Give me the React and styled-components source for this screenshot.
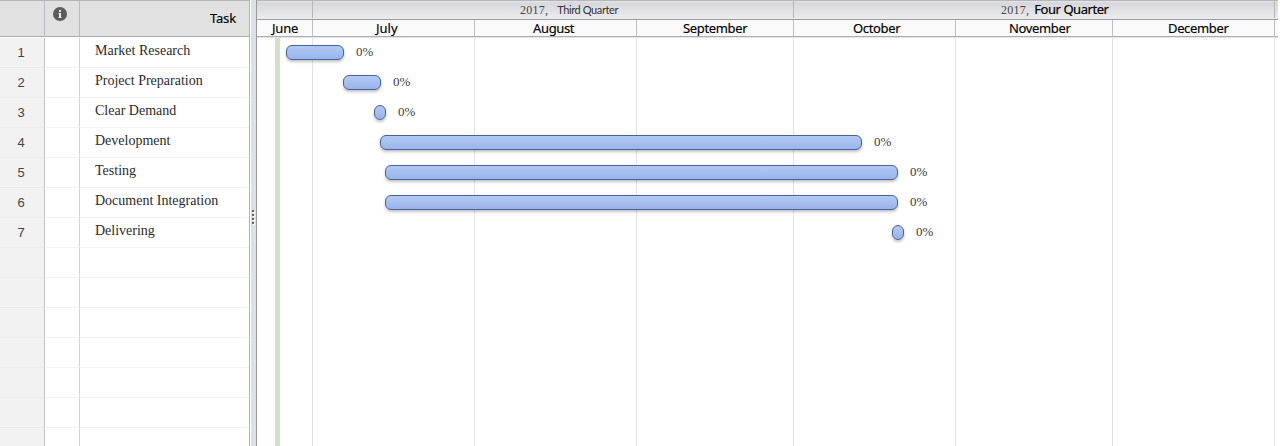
import React from "react";
import styled, { createGlobalStyle } from "styled-components";

const GlobalStyle = createGlobalStyle`
  * { box-sizing: border-box; }
  body { margin: 0; background: #fff; overflow: hidden; }
`;

const Page = styled.div`
  display: flex;
  width: 1280px;
  height: 446px;
  overflow: hidden;
  background: #fff;
`;

const TaskTable = styled.div`
  flex: none;
  width: 250px;
  border-right: 1px solid #b3b3b3;
`;

const Row = styled.div`
  display: grid;
  grid-template-columns: 45px 35px 1fr;
  height: 30px;
`;

const HeaderRow = styled(Row)`
  height: 37px;
  margin-bottom: 1px;
`;

const HeaderCell = styled.div`
  display: flex;
  justify-content: ${(p) => p.$align || "center"};
  background: #e1e1e1;
  border-top: 1px solid #b5b6ba;
  border-bottom: 1px solid #acacac;
  border-right: ${(p) => (p.$last ? "0" : "1px solid #b9babd")};
  padding: ${(p) => p.$pad || "0"};
  font: 400 13px/17px "Noto Sans", "Open Sans", sans-serif;
  -webkit-text-stroke: 0.15px #000;
  letter-spacing: -0.15px;
  color: #000;
`;

const IndexCell = styled.div`
  background: #f2f2f2;
  border-right: 1px solid #c3c3c3;
  border-bottom: 1px solid #ebebeb;
  padding: 7px 2px 0 0;
  text-align: center;
  font: 13px/15px "Liberation Sans", Arial, sans-serif;
  color: #444;
`;

const InfoCell = styled.div`
  border-right: 1px solid #d3d3d3;
  border-bottom: 1px solid #f2f2f2;
`;

const NameCell = styled.div`
  border-bottom: 1px solid #f2f2f2;
  padding: 4px 0 0 15px;
  font: 14px/17px "Liberation Serif", "Times New Roman", serif;
  white-space: nowrap;
  color: #2b2b2b;
`;

const Splitter = styled.div`
  flex: none;
  display: flex;
  flex-direction: column;
  gap: 2px;
  width: 7px;
  padding: 210px 0 0 1px;
  border-left: 1px solid #fff;
  border-right: 1px solid #999a9d;
  background: #dde1e6;
`;

const GripDot = styled.i`
  width: 2px;
  height: 2px;
  background: #60636a;
  box-shadow: 1px 1px 0 #fff;
`;

const Timeline = styled.div`
  flex: none;
  display: flex;
  flex-direction: column;
  width: 1021px;
  height: 446px;
  overflow: hidden;
`;

const Quarters = styled.div`
  flex: none;
  display: flex;
  height: 20px;
  border-top: 1px solid #b5b6ba;
  border-bottom: 1px solid #9c9ca0;
  background: linear-gradient(#e4e5e9 0, #d7d8dc 2px, #ececee 100%);
`;

const Quarter = styled.div`
  flex: none;
  width: ${(p) => p.$w}px;
  height: 17px;
  padding-left: ${(p) => p.$pad || 0}px;
  border-right: 1px solid #b7b8bb;
  display: flex;
  gap: ${(p) => p.$gap || 0}px;
  white-space: nowrap;
`;

const Year = styled.span`
  font: 12px/18px "Liberation Serif", serif;
  letter-spacing: 0.25px;
  color: #444;
`;

const QuarterName = styled.span`
  font: ${(p) => (p.$strong ? '400 13px/17px "Noto Sans"' : '400 11px/17px Lato')}, "Open Sans", sans-serif;
  -webkit-text-stroke: ${(p) => (p.$strong ? "0.2px #000" : "0")};
  letter-spacing: ${(p) => p.$track}px;
  color: ${(p) => (p.$strong ? "#000" : "#333")};
`;

const Months = styled.div`
  flex: none;
  display: flex;
  height: 18px;
  border-bottom: 1px solid #e3e4e5;
  background: #fafafa;
`;

const Month = styled.div`
  flex: none;
  width: ${(p) => p.$w}px;
  padding-left: ${(p) => p.$pad}px;
  border-right: 1px solid #bfbfc1;
  border-bottom: 1px solid #acadb0;
  font: 400 13px/17px "Noto Sans", "Open Sans", sans-serif;
  -webkit-text-stroke: 0.15px #000;
  letter-spacing: ${(p) => p.$track}px;
  white-space: nowrap;
  color: #000;
`;

const NextMonth = styled.div`
  flex: 1;
  border-bottom: 1px solid #acadb0;
`;

const Chart = styled.div`
  flex: 1;
  display: grid;
  > * { grid-area: 1 / 1; }
`;

const Columns = styled.div`
  display: flex;
`;

const Column = styled.div`
  flex: none;
  width: ${(p) => p.$w}px;
  padding-left: 18px;
  border-right: 1px solid #e4e4e6;
`;

const TodayBand = styled.div`
  width: 5px;
  height: 100%;
  background: #cfe2c9;
`;

const Bars = styled.div`
  display: flex;
  flex-direction: column;
  z-index: 1;
`;

const BarRow = styled.div`
  display: flex;
  gap: 12px;
  height: 30px;
  padding: 7px 0 0 ${(p) => p.$start}px;
`;

const Bar = styled.div`
  width: ${(p) => p.$w}px;
  height: 15px;
  border: 1px solid #48619a;
  border-radius: 6px;
  background: linear-gradient(#b3c9f2, #98b5ec);
  box-shadow: 0 2px 3px rgba(0, 0, 0, 0.24);
`;

const Percent = styled.span`
  font: 13px/14px "Liberation Serif", serif;
  color: #3b3b3b;
`;

const tasks = [
  { name: "Market Research", start: 29, width: 58 },
  { name: "Project Preparation", start: 86, width: 38 },
  { name: "Clear Demand", start: 117, width: 12 },
  { name: "Development", start: 123, width: 482 },
  { name: "Testing", start: 128, width: 513 },
  { name: "Document Integration", start: 128, width: 513 },
  { name: "Delivering", start: 635, width: 12 },
];

const months = [
  { name: "June", w: 56, pad: 15, track: -0.2 },
  { name: "July", w: 162, pad: 63, track: 0 },
  { name: "August", w: 162, pad: 58, track: -0.35 },
  { name: "September", w: 157, pad: 46, track: -0.35 },
  { name: "October", w: 162, pad: 59, track: -0.35 },
  { name: "November", w: 157, pad: 53, track: -0.35 },
  { name: "December", w: 162, pad: 55, track: -0.35 },
];

const InfoIcon = () => (
  <svg width="14" height="14" viewBox="0 0 14 14">
    <circle cx="7" cy="7" r="7" fill="#5c5c5c" />
    <path d="M6 3h2v2H6zM6 6h2v5H6z" fill="#e8e8e8" />
    <path d="M5 6h1v1H5zM5 10h1v1H5zM8 10h1v1H8z" fill="#a8a8a8" />
  </svg>
);

export default function App() {
  return (
    <Page>
      <GlobalStyle />
      <TaskTable>
        <HeaderRow>
          <HeaderCell />
          <HeaderCell $pad="6px 4px 0 0"><InfoIcon /></HeaderCell>
          <HeaderCell $last $align="flex-end" $pad="9px 13px 0 0">Task</HeaderCell>
        </HeaderRow>
        {Array.from({ length: 14 }, (_, i) => (
          <Row key={i}>
            <IndexCell>{tasks[i] ? i + 1 : ""}</IndexCell>
            <InfoCell />
            <NameCell>{tasks[i]?.name}</NameCell>
          </Row>
        ))}
      </TaskTable>
      <Splitter>
        <GripDot /><GripDot /><GripDot /><GripDot />
      </Splitter>
      <Timeline>
        <Quarters>
          <Quarter $w={56} />
          <Quarter $w={481} $pad={207} $gap={9}>
            <Year>2017,</Year>
            <QuarterName $track={-0.4}>Third Quarter</QuarterName>
          </Quarter>
          <Quarter $w={481} $pad={207} $gap={5}>
            <Year>2017,</Year>
            <QuarterName $strong $track={-0.45}>Four Quarter</QuarterName>
          </Quarter>
        </Quarters>
        <Months>
          {months.map((m) => (
            <Month key={m.name} $w={m.w} $pad={m.pad} $track={m.track}>{m.name}</Month>
          ))}
          <NextMonth />
        </Months>
        <Chart>
          <Columns>
            {months.map((m, i) => (
              <Column key={m.name} $w={m.w}>{i === 0 && <TodayBand />}</Column>
            ))}
          </Columns>
          <Bars>
            {tasks.map((t) => (
              <BarRow key={t.name} $start={t.start}>
                <Bar $w={t.width} />
                <Percent>0%</Percent>
              </BarRow>
            ))}
          </Bars>
        </Chart>
      </Timeline>
    </Page>
  );
}
